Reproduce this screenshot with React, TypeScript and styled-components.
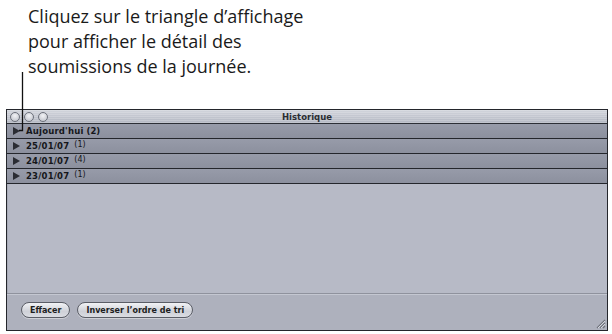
import React from 'react'
import styled, { createGlobalStyle } from 'styled-components'

const GlobalStyle = createGlobalStyle`
  html, body {
    margin: 0;
    padding: 0;
    background: #ffffff;
  }
`

const Page = styled.div`
  position: relative;
  width: 612px;
  height: 334px;
  overflow: hidden;
  background: #ffffff;
`

const Callout = styled.div`
  padding: 4px 0 0 28px;
  font-family: "Open Sans", "Noto Sans", sans-serif;
  font-size: 18px;
  line-height: 25px;
  color: #1a1a1a;
  height: 76px;
`

const Leader = styled.svg`
  position: absolute;
  left: 0;
  top: 0;
  pointer-events: none;
`

const Window = styled.div`
  margin: 29px 0 0 6px;
  width: 600px;
  height: 220px;
  border: 1px solid #24262c;
  display: flex;
  flex-direction: column;
  font-family: "DejaVu Sans", "Liberation Sans", sans-serif;
`

const TitleBar = styled.div`
  position: relative;
  height: 13px;
  display: flex;
  align-items: center;
  padding-left: 3px;
  border-bottom: 1px solid #2c2f36;
  background: repeating-linear-gradient(
      to bottom,
      rgba(255, 255, 255, 0.18) 0px,
      rgba(255, 255, 255, 0.18) 1px,
      rgba(0, 0, 0, 0) 1px,
      rgba(0, 0, 0, 0) 2px
    ),
    linear-gradient(to bottom, #d2d5dc, #b3b7c2);
`

const Lights = styled.div`
  display: flex;
  gap: 4px;
`

const Light = styled.span`
  width: 8px;
  height: 8px;
  border-radius: 50%;
  border: 1px solid #6d717b;
  background: radial-gradient(circle at 50% 35%, #f2f3f6, #b9bcc5);
`

const Title = styled.div`
  position: absolute;
  left: 0;
  right: 0;
  top: 0;
  bottom: 0;
  display: flex;
  align-items: center;
  justify-content: center;
  font-size: 8.5px;
  font-weight: bold;
  color: #2b2d33;
`

const Row = styled.div`
  height: 14px;
  border-bottom: 1px solid #24262c;
  background: linear-gradient(to bottom, #979ba9, #8c909e);
  display: flex;
  align-items: center;
  padding-left: 6px;
  font-size: 8.5px;
  color: #15161a;
`

const Disclosure = styled.span`
  width: 0;
  height: 0;
  border-top: 4px solid transparent;
  border-bottom: 4px solid transparent;
  border-left: 7px solid #2a2c33;
  margin-right: 6px;
`

const RowLabel = styled.span`
  font-weight: bold;
  letter-spacing: 0.2px;
`

const Count = styled.span<{ $raised?: boolean }>`
  margin-left: ${p => (p.$raised ? '5px' : '3px')};
  font-weight: ${p => (p.$raised ? 'normal' : 'bold')};
  position: relative;
  top: ${p => (p.$raised ? '-2px' : '0')};
  font-size: ${p => (p.$raised ? '8px' : '8.5px')};
`

const Body = styled.div`
  flex: 1;
  background: #b7bac6;
  border-left: 1px solid #a8abb7;
`

const BottomBar = styled.div`
  position: relative;
  height: 37px;
  border-top: 1px solid #8f929d;
  box-shadow: inset 0 1px 0 #c4c7d1;
  background: #aeb1bd;
  display: flex;
  align-items: center;
  gap: 7px;
  padding-left: 14px;
  padding-bottom: 4px;
  box-sizing: border-box;
`

const PillButton = styled.button`
  height: 16px;
  padding: 0 8px;
  border-radius: 8px;
  border: 1px solid #5a5d66;
  background: linear-gradient(to bottom, #f1f2f5, #cfd1d8 60%, #dadce2);
  font-family: "DejaVu Sans", "Liberation Sans", sans-serif;
  font-size: 8px;
  font-weight: bold;
  color: #1c1d21;
  display: flex;
  align-items: center;
  box-shadow: 0 1px 0 rgba(255, 255, 255, 0.4);
`

const Grip = styled.svg`
  position: absolute;
  right: 1px;
  bottom: 1px;
`

const days = [
  { label: '25/01/07', count: 1 },
  { label: '24/01/07', count: 4 },
  { label: '23/01/07', count: 1 },
]

export default function App() {
  return (
    <Page>
      <GlobalStyle />
      <Callout>
        Cliquez sur le triangle d’affichage
        <br />
        pour afficher le détail des
        <br />
        soumissions de la journée.
      </Callout>
      <Window>
        <TitleBar>
          <Lights>
            <Light />
            <Light />
            <Light />
          </Lights>
          <Title>Historique</Title>
        </TitleBar>
        <Row>
          <Disclosure />
          <RowLabel>Aujourd'hui</RowLabel>
          <Count>(2)</Count>
        </Row>
        {days.map(d => (
          <Row key={d.label}>
            <Disclosure />
            <RowLabel>{d.label}</RowLabel>
            <Count $raised>({d.count})</Count>
          </Row>
        ))}
        <Body />
        <BottomBar>
          <PillButton>Effacer</PillButton>
          <PillButton>Inverser l’ordre de tri</PillButton>
          <Grip width="12" height="12" viewBox="0 0 12 12">
            <path d="M11 3 L3 11 M11 6 L6 11 M11 9 L9 11" stroke="#6f727c" strokeWidth="1.2" />
            <path d="M11 4 L4 11 M11 7 L7 11" stroke="#e2e4ea" strokeWidth="0.8" />
          </Grip>
        </BottomBar>
      </Window>
      <Leader width="612" height="334">
        <path d="M22.5 72 V130.5 H19" stroke="#111" strokeWidth="1.3" fill="none" />
      </Leader>
    </Page>
  )
}
